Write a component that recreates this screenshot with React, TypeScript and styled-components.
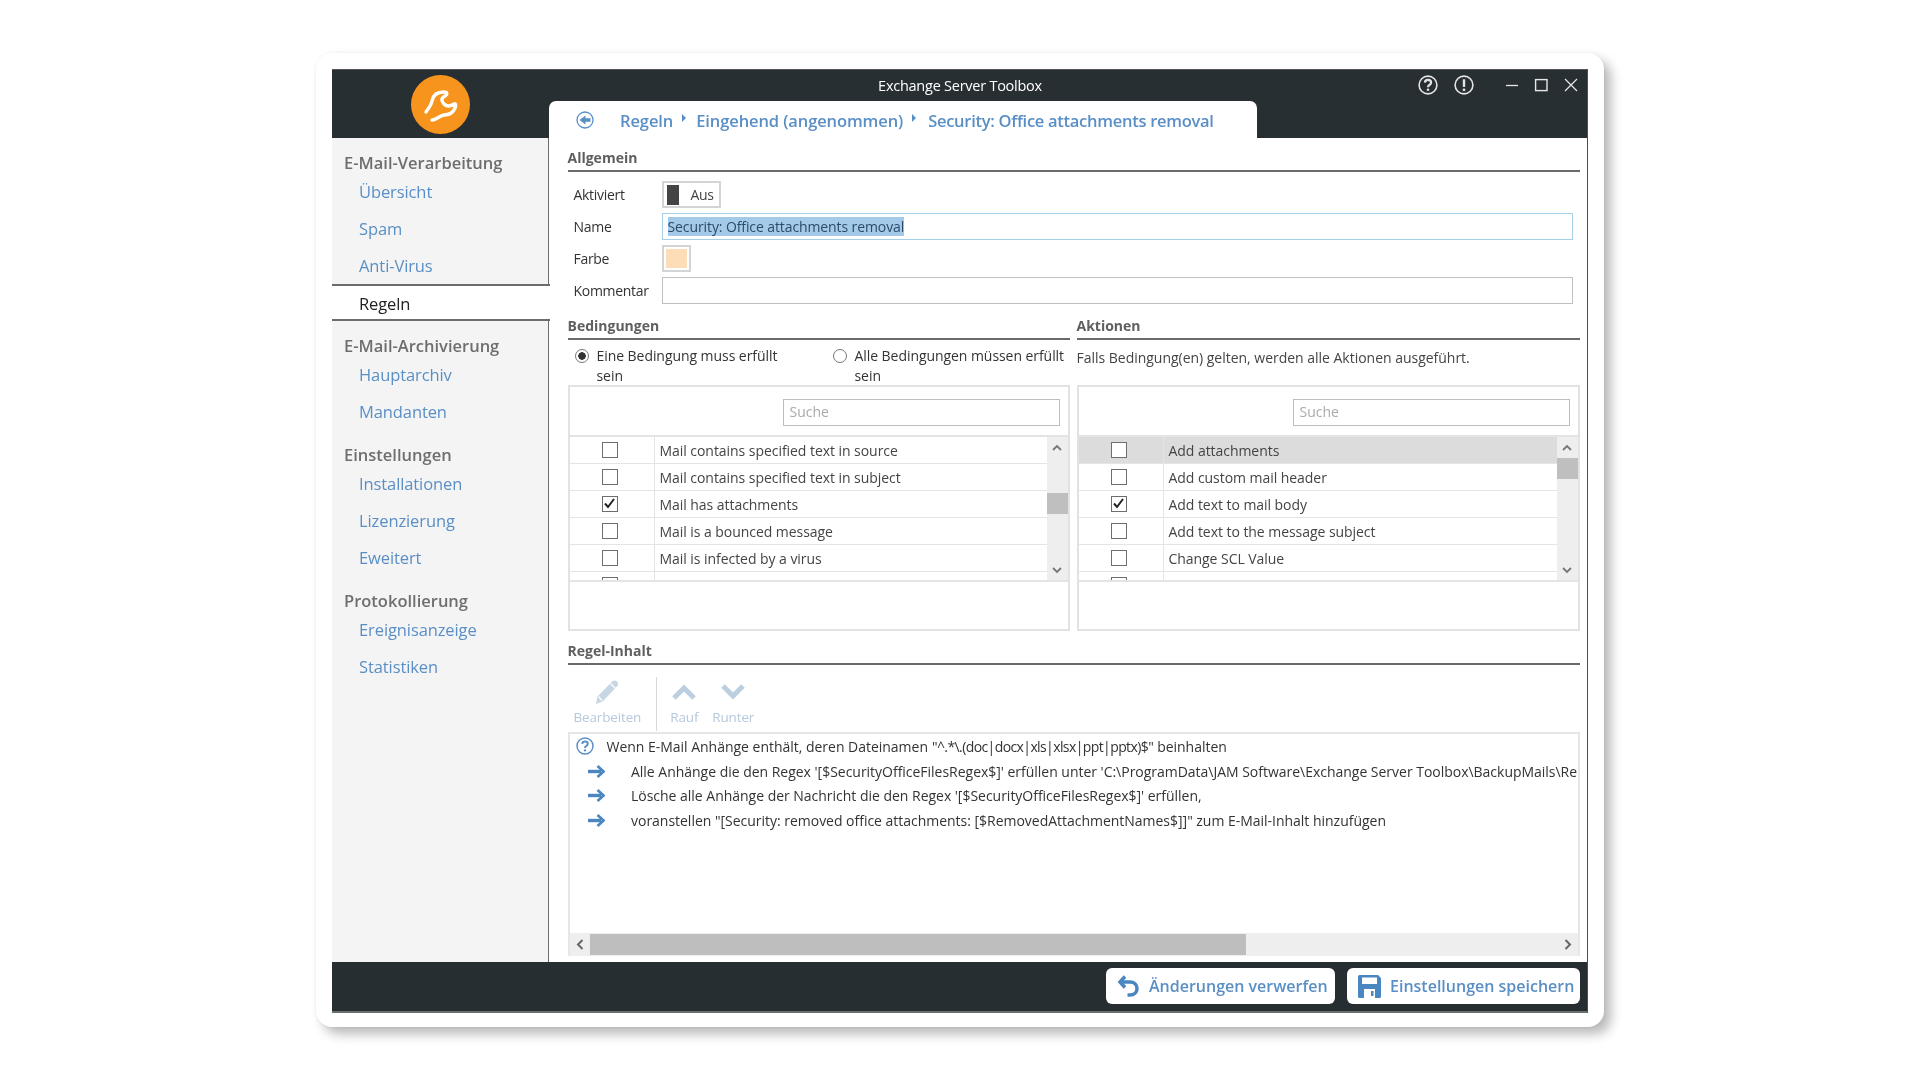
import React from "react";
import styled, { createGlobalStyle } from "styled-components";

const Global = createGlobalStyle`
  html, body { margin: 0; padding: 0; background: #fff; }
  body { width: 1920px; height: 1080px; overflow: hidden; font-family: "Open Sans", "Liberation Sans", sans-serif; }
  * { box-sizing: border-box; }
`;

const BLUE = "#5a8fc6";

const Page = styled.div`
  padding: 53px 0 0 316px;
`;
const Card = styled.div`
  width: 1288px;
  height: 974px;
  padding: 16px;
  background: #fff;
  border-radius: 16px;
  box-shadow: 7px 7px 12px rgba(0, 0, 0, 0.28), 0 0 3px rgba(0, 0, 0, 0.06);
`;
const Win = styled.div`
  width: 1256px;
  height: 944px;
  display: flex;
  flex-direction: column;
  border-top: 1px solid #555;
  border-right: 1.5px solid #4a4f52;
  border-bottom: 2px solid #6a6f72;
  filter: blur(0.3px);
`;
const TopBar = styled.header`
  height: 68px;
  flex: none;
  display: flex;
  background: #282f32;
`;
const LogoCell = styled.div`
  width: 217px;
  flex: none;
  display: flex;
  justify-content: center;
  padding: 5px 0 0 0;
`;
const TopRight = styled.div`
  flex: 1;
  display: flex;
  flex-direction: column;
`;
const TitleRow = styled.div`
  height: 31px;
  display: flex;
  align-items: center;
`;
const Title = styled.div`
  width: 822px;
  text-align: center;
  color: #fff;
  font-size: 14.5px;
  letter-spacing: -0.25px;
`;
const Controls = styled.div`
  display: flex;
  align-items: center;
  margin-left: 47px;
  padding-bottom: 1px;
  svg { display: block; }
`;
const Tab = styled.nav`
  width: 708px;
  height: 37px;
  background: #fff;
  border-radius: 7px 7px 0 0;
  display: flex;
  align-items: center;
  padding: 1px 0 0 27px;
  color: ${BLUE};
  font-size: 16.5px;
  font-weight: 600;
  letter-spacing: -0.1px;
`;
const CrumbGap = styled.span`
  width: 26px;
`;
const CrumbArrow = styled.span`
  width: 0;
  height: 0;
  border-left: 4px solid ${BLUE};
  border-top: 4px solid transparent;
  border-bottom: 4px solid transparent;
  margin: 0 10px 4px 9px;
`;
const CrumbLast = styled.span`
  margin-left: 2px;
  letter-spacing: -0.28px;
`;
const Body = styled.div`
  flex: 1;
  display: flex;
  min-height: 0;
`;
const Sidebar = styled.aside`
  width: 217px;
  flex: none;
  background: #f4f4f4;
  border-right: 1.5px solid #6c6c6c;
  padding-top: 14px;
`;
const NavHead = styled.div<{ $first?: boolean }>`
  height: 21px;
  line-height: 21px;
  margin-top: ${(p) => (p.$first ? 0 : 14)}px;
  padding-left: 12px;
  color: #6e6e6e;
  font-size: 16.5px;
  font-weight: 600;
`;
const NavItem = styled.div`
  height: 37px;
  line-height: 37px;
  padding-left: 27px;
  color: ${BLUE};
  font-size: 16.5px;
  letter-spacing: -0.1px;
`;
const NavActive = styled(NavItem)`
  background: #fff;
  color: #222;
  margin-right: -1.5px;
  position: relative;
  border-top: 2px solid #6c6c6c;
  border-bottom: 2px solid #6c6c6c;
  height: 37px;
  line-height: 35px;
`;
const Content = styled.main`
  flex: 1;
  background: #fff;
  padding: 0 7px 6px 18.5px;
  display: flex;
  flex-direction: column;
  min-width: 0;
`;
const Heading = styled.div`
  height: 26px;
  border-bottom: 2px solid #6a6a6a;
  color: #5f5f5f;
  font-size: 14px;
  font-weight: 700;
  line-height: 24px;
`;
const TopHeading = styled(Heading)`
  margin-top: 8px;
`;
const Form = styled.div`
  display: grid;
  grid-template-columns: 94px 1fr;
  grid-auto-rows: 27px;
  row-gap: 5px;
  padding: 9px 7px 0 0;
  align-items: center;
`;
const Label = styled.label`
  padding-left: 6px;
  font-size: 14px;
  letter-spacing: -0.3px;
  color: #333;
`;
const Toggle = styled.div`
  width: 59px;
  height: 27px;
  border: 2px solid #d4d4d4;
  display: flex;
  align-items: center;
  padding-left: 3px;
  font-size: 14px;
  letter-spacing: -0.3px;
  color: #444;
`;
const ToggleKnob = styled.span`
  width: 12px;
  height: 20px;
  background: #444;
  margin-right: 12px;
`;
const Field = styled.div<{ $focus?: boolean }>`
  height: 27px;
  border: 1.5px solid ${(p) => (p.$focus ? "#a6cfea" : "#c0c0c0")};
  padding: 0 0 0 5px;
  display: flex;
  align-items: center;
`;
const Selected = styled.span`
  background: #a3cbe9;
  color: #2e4a6a;
  font-size: 14px;
  letter-spacing: -0.1px;
  line-height: 19px;
`;
const Swatch = styled.div`
  width: 29px;
  height: 27px;
  border: 2px solid #d4d4d4;
  padding: 2px;
  &::after {
    content: "";
    display: block;
    height: 100%;
    background: #fddcb8;
  }
`;
const Columns = styled.div`
  display: grid;
  grid-template-columns: 502px 503px;
  column-gap: 7px;
  margin-top: 10px;
`;
const Options = styled.div`
  height: 45px;
  display: flex;
  padding-top: 6px;
`;
const Radio = styled.div<{ $w: number }>`
  display: flex;
  gap: 8px;
  font-size: 14px;
  letter-spacing: -0.06px;
  line-height: 20px;
  color: #333;
  padding-left: 7px;
  width: ${(p) => p.$w}px;
`;
const RadioText = styled.span<{ $w: number }>`
  width: ${(p) => p.$w}px;
  flex: none;
`;
const Dot = styled.span<{ $on?: boolean }>`
  width: 14px;
  height: 14px;
  flex: none;
  margin-top: 3px;
  border-radius: 50%;
  border: 1.5px solid #777;
  background: ${(p) => (p.$on ? "radial-gradient(circle, #333 0 3.5px, #fff 4px)" : "#fff")};
`;
const ActionNote = styled.div`
  height: 45px;
  padding-top: 8px;
  font-size: 14px;
  letter-spacing: -0.02px;
  line-height: 20px;
  color: #444;
`;
const ListBox = styled.div`
  height: 246px;
  border: 2px solid #e2e2e2;
  display: flex;
  flex-direction: column;
`;
const SearchRow = styled.div`
  height: 50px;
  flex: none;
  display: flex;
  justify-content: flex-end;
  padding: 12px 8px 0 0;
  border-bottom: 2px solid #e4e4e4;
`;
const Search = styled.div`
  width: 277px;
  height: 27px;
  border: 1.5px solid #bdbdbd;
  padding-left: 6px;
  line-height: 23px;
  font-size: 14px;
  color: #aaa;
`;
const ListArea = styled.div`
  height: 145px;
  flex: none;
  display: flex;
  border-bottom: 2px solid #e4e4e4;
`;
const Rows = styled.div`
  flex: 1;
  overflow: hidden;
`;
const Row = styled.div<{ $hot?: boolean }>`
  height: 27px;
  display: flex;
  align-items: center;
  border-bottom: 1.5px solid #e4e4e4;
  background: ${(p) => (p.$hot ? "#dcdcdc" : "#fff")};
`;
const CheckCell = styled.div`
  width: 85px;
  height: 100%;
  flex: none;
  display: flex;
  justify-content: center;
  align-items: center;
  border-right: 1.5px solid #e4e4e4;
  padding-right: 4px;
`;
const Box = styled.span`
  width: 16px;
  height: 16px;
  background: #fff;
  border: 1.5px solid #6e6e6e;
  display: block;
  svg { display: block; }
`;
const RowText = styled.div`
  padding-left: 5px;
  font-size: 14px;
  letter-spacing: -0.05px;
  color: #444;
  white-space: nowrap;
`;
const VBar = styled.div`
  width: 21px;
  flex: none;
  background: #eeeeee;
  position: relative;
  display: flex;
  flex-direction: column;
  justify-content: space-between;
  align-items: center;
  padding: 7px 0 6px;
  svg { display: block; }
`;
const Thumb = styled.span<{ $top: number }>`
  position: absolute;
  left: 0;
  right: 0;
  top: ${(p) => p.$top}px;
  height: 21px;
  background: #bfbfbf;
`;
const Tools = styled.div`
  height: 67px;
  flex: none;
  display: flex;
  align-items: stretch;
  padding: 12px 0 1px 0;
`;
const ToolGroup = styled.div`
  display: flex;
  gap: 14px;
  padding: 0 7px 0 13px;
`;
const ToolGroupFirst = styled(ToolGroup)`
  border-right: 1px solid #d8d8d8;
  padding: 0 15px 0 6px;
`;
const Tool = styled.div`
  display: flex;
  flex-direction: column;
  align-items: center;
  font-size: 13.5px;
  letter-spacing: -0.15px;
  line-height: 16px;
  color: #b6c9dc;
  svg { display: block; margin: 3px 0 5px; height: 24px; }
`;
const RuleBox = styled.div`
  flex: 1;
  min-height: 0;
  border: 2px solid #e6e6e6;
  border-bottom: 0;
  display: flex;
  flex-direction: column;
`;
const RuleLines = styled.div`
  flex: 1;
  min-height: 0;
  overflow: hidden;
`;
const RuleLine = styled.div<{ $sub?: boolean }>`
  height: 24.7px;
  display: flex;
  align-items: center;
  padding-left: ${(p) => (p.$sub ? 18.5 : 6)}px;
  font-size: 14px;
  letter-spacing: -0.02px;
  color: #333;
  white-space: nowrap;
  svg { flex: none; display: block; margin-right: ${(p) => (p.$sub ? 26 : 13)}px; }
`;
const Pattern = styled.span`
  letter-spacing: -0.6px;
  margin: 0 4px;
`;
const HBar = styled.div`
  height: 23px;
  flex: none;
  display: flex;
  background: #eeeeee;
  align-items: center;
  svg { display: block; }
`;
const HEnd = styled.span`
  width: 20px;
  flex: none;
  display: flex;
  justify-content: center;
`;
const HThumb = styled.span`
  width: 656px;
  height: 21px;
  background: #bebebe;
  margin-right: auto;
`;
const Footer = styled.footer`
  height: 49px;
  flex: none;
  background: #262e31;
  display: flex;
  justify-content: flex-end;
  gap: 12px;
  padding: 6px 7px 0 0;
`;
const FootBtn = styled.button<{ $w: number }>`
  width: ${(p) => p.$w}px;
  height: 36px;
  background: #fff;
  border: 0;
  border-radius: 6px;
  display: flex;
  align-items: center;
  gap: 9px;
  padding: 0 0 0 11px;
  color: ${BLUE};
  font-family: inherit;
  font-size: 16px;
  font-weight: 600;
  letter-spacing: 0;
  white-space: nowrap;
  svg { display: block; flex: none; }
`;

const Logo = () => (
  <svg width="59" height="59" viewBox="0 0 59 59">
    <circle cx="29.5" cy="29.5" r="29.5" fill="#f7941d" />
    <path
      d="M15 37 C17 33 20 32 21 26 C22 20 26 17 33 17 C36 17 37 19 34 21 C30 23 30 26 33 29 C36 32 40 31 43 29 C45 28 45 31 44 33 C42 38 38 40 33 40 C28 41 25 45 21 45"
      fill="none"
      stroke="#fff"
      strokeWidth="3.4"
      strokeLinecap="round"
      strokeLinejoin="round"
    />
  </svg>
);

const BackIcon = () => (
  <svg width="18" height="18" viewBox="0 0 18 18">
    <circle cx="9" cy="9" r="8" fill="none" stroke={BLUE} strokeWidth="1.3" />
    <path d="M14.500 7.300H9.500V4.500L3.500 9l6 4.500v-2.800h5z" fill={BLUE} />
  </svg>
);

const HelpIcon = ({ c = "#e4e4e4", s = 20 }: { c?: string; s?: number }) => (
  <svg width={s} height={s} viewBox="0 0 20 20">
    <circle cx="10" cy="10" r="8.9" fill="none" stroke={c} strokeWidth="1.6" />
    <path d="M6.900 7.600C7 5.600 8.400 4.900 10 4.900c1.800 0 3.100 1 3.100 2.600 0 1.500-1 2.100-2 2.800-.8.500-1.100 1-1.100 1.900" fill="none" stroke={c} strokeWidth="2.200" />
    <circle cx="10" cy="14.800" r="1.300" fill={c} />
  </svg>
);

const AlertIcon = () => (
  <svg width="20" height="20" viewBox="0 0 20 20" style={{ marginLeft: 16 }}>
    <circle cx="10" cy="10" r="8.9" fill="none" stroke="#e4e4e4" strokeWidth="1.6" />
    <path d="M10 4.300v7.600" stroke="#e4e4e4" strokeWidth="2.400" />
    <circle cx="10" cy="14.800" r="1.400" fill="#e4e4e4" />
  </svg>
);

const WinButtons = () => (
  <svg width="72" height="14" viewBox="0 0 72 14" style={{ marginLeft: 32 }}>
    <path d="M0 7.500h12" stroke="#e8e8e8" strokeWidth="1.300" />
    <rect x="29.600" y="1.600" width="11.400" height="11" fill="none" stroke="#e8e8e8" strokeWidth="1.400" />
    <path d="M59 1l12 12M71 1L59 13" stroke="#e8e8e8" strokeWidth="1.200" />
  </svg>
);

const Tick = () => (
  <svg width="13" height="13" viewBox="0 0 13 13">
    <path d="M2 6.500l3 3.500 6-8" fill="none" stroke="#222" strokeWidth="2" />
  </svg>
);

const ChevUp = () => (
  <svg width="10" height="7" viewBox="0 0 10 7">
    <path d="M1 6l4-4 4 4" fill="none" stroke="#777" strokeWidth="1.800" />
  </svg>
);
const ChevDown = () => (
  <svg width="10" height="7" viewBox="0 0 10 7">
    <path d="M1 1l4 4 4-4" fill="none" stroke="#777" strokeWidth="1.800" />
  </svg>
);
const ChevLeft = () => (
  <svg width="8" height="11" viewBox="0 0 8 11">
    <path d="M6.500 1L2 5.500 6.500 10" fill="none" stroke="#666" strokeWidth="2" />
  </svg>
);
const ChevRight = () => (
  <svg width="8" height="11" viewBox="0 0 8 11">
    <path d="M1.500 1L6 5.500 1.500 10" fill="none" stroke="#666" strokeWidth="2" />
  </svg>
);

const Pencil = () => (
  <svg width="24" height="24" viewBox="0 0 24 24">
    <path d="M1 24l1.500-7.500L17 1.500c1.800-1.500 3.700-1.200 5 0s1.600 3.200 0 5L7.500 21.500z" fill="#c8d6e4" />
    <path d="M3.500 16.500l3.500 4M15.500 3.500l5 5" stroke="#fff" strokeWidth="1.200" />
  </svg>
);
const BigUp = () => (
  <svg width="24" height="16" viewBox="0 0 24 16">
    <path d="M2 14L12 4l10 10" fill="none" stroke="#bccfe1" strokeWidth="5" />
  </svg>
);
const BigDown = () => (
  <svg width="24" height="16" viewBox="0 0 24 16">
    <path d="M2 2l10 10L22 2" fill="none" stroke="#bccfe1" strokeWidth="5" />
  </svg>
);
const RArrow = () => (
  <svg width="17" height="13" viewBox="0 0 17 13">
    <path d="M0 6.500h13" stroke="#4a86c0" strokeWidth="3.400" />
    <path d="M9.500 1l6 5.500-6 5.500" fill="none" stroke="#4a86c0" strokeWidth="2.600" />
  </svg>
);
const Undo = () => (
  <svg width="23" height="23" viewBox="0 0 23 23">
    <path d="M8 1.500L3 7l5 5.500" fill="none" stroke="#4a86c0" strokeWidth="3.500" />
    <path d="M3 7h10c4 0 7 2.500 7 6.500S17 20 13 20h-2.500" fill="none" stroke="#4a86c0" strokeWidth="3.500" />
  </svg>
);
const Floppy = () => (
  <svg width="23" height="23" viewBox="0 0 23 23">
    <path d="M0 1.500A1.500 1.500 0 0 1 1.500 0H20l3 3v18.500a1.500 1.500 0 0 1-1.500 1.500H1.500A1.500 1.500 0 0 1 0 21.500z" fill="#4a86c0" />
    <rect x="4" y="2.500" width="15" height="6.500" fill="#fff" />
    <rect x="6" y="14" width="11" height="9" fill="#fff" />
    <rect x="13" y="16" width="2.500" height="5" fill="#4a86c0" />
  </svg>
);

const CheckBox = ({ on }: { on?: boolean }) => <Box>{on && <Tick />}</Box>;

type Item = { t: string; on?: boolean; hot?: boolean };
const List = ({ items, top }: { items: Item[]; top: number }) => (
  <ListBox>
    <SearchRow>
      <Search>Suche</Search>
    </SearchRow>
    <ListArea>
      <Rows>
        {items.map((it, i) => (
          <Row key={i} $hot={it.hot}>
            <CheckCell>
              <CheckBox on={it.on} />
            </CheckCell>
            <RowText>{it.t}</RowText>
          </Row>
        ))}
      </Rows>
      <VBar>
        <ChevUp />
        <Thumb $top={top} />
        <ChevDown />
      </VBar>
    </ListArea>
  </ListBox>
);

const conditions: Item[] = [
  { t: "Mail contains specified text in source" },
  { t: "Mail contains specified text in subject" },
  { t: "Mail has attachments", on: true },
  { t: "Mail is a bounced message" },
  { t: "Mail is infected by a virus" },
  { t: "" },
];
const actions: Item[] = [
  { t: "Add attachments", hot: true },
  { t: "Add custom mail header" },
  { t: "Add text to mail body", on: true },
  { t: "Add text to the message subject" },
  { t: "Change SCL Value" },
  { t: "" },
];

export default function App() {
  return (
    <Page>
      <Global />
      <Card>
        <Win>
          <TopBar>
            <LogoCell>
              <Logo />
            </LogoCell>
            <TopRight>
              <TitleRow>
                <Title>Exchange Server Toolbox</Title>
                <Controls>
                  <HelpIcon />
                  <AlertIcon />
                  <WinButtons />
                </Controls>
              </TitleRow>
              <Tab>
                <BackIcon />
                <CrumbGap />
                Regeln
                <CrumbArrow />
                Eingehend (angenommen)
                <CrumbArrow />
                <CrumbLast>Security: Office attachments removal</CrumbLast>
              </Tab>
            </TopRight>
          </TopBar>
          <Body>
            <Sidebar>
              <NavHead $first>E-Mail-Verarbeitung</NavHead>
              <NavItem>Übersicht</NavItem>
              <NavItem>Spam</NavItem>
              <NavItem>Anti-Virus</NavItem>
              <NavActive>Regeln</NavActive>
              <NavHead>E-Mail-Archivierung</NavHead>
              <NavItem>Hauptarchiv</NavItem>
              <NavItem>Mandanten</NavItem>
              <NavHead>Einstellungen</NavHead>
              <NavItem>Installationen</NavItem>
              <NavItem>Lizenzierung</NavItem>
              <NavItem>Eweitert</NavItem>
              <NavHead>Protokollierung</NavHead>
              <NavItem>Ereignisanzeige</NavItem>
              <NavItem>Statistiken</NavItem>
            </Sidebar>
            <Content>
              <TopHeading>Allgemein</TopHeading>
              <Form>
                <Label>Aktiviert</Label>
                <Toggle>
                  <ToggleKnob />
                  Aus
                </Toggle>
                <Label>Name</Label>
                <Field $focus>
                  <Selected>Security: Office attachments removal</Selected>
                </Field>
                <Label>Farbe</Label>
                <Swatch />
                <Label>Kommentar</Label>
                <Field />
              </Form>
              <Columns>
                <div>
                  <Heading>Bedingungen</Heading>
                  <Options>
                    <Radio $w={258}>
                      <Dot $on />
                      <RadioText $w={195}>Eine Bedingung muss erfüllt sein</RadioText>
                    </Radio>
                    <Radio $w={244}>
                      <Dot />
                      <RadioText $w={216}>Alle Bedingungen müssen erfüllt sein</RadioText>
                    </Radio>
                  </Options>
                  <List items={conditions} top={56} />
                </div>
                <div>
                  <Heading>Aktionen</Heading>
                  <ActionNote>Falls Bedingung(en) gelten, werden alle Aktionen ausgeführt.</ActionNote>
                  <List items={actions} top={21} />
                </div>
              </Columns>
              <TopHeading>Regel-Inhalt</TopHeading>
              <Tools>
                <ToolGroupFirst>
                  <Tool>
                    <Pencil />
                    Bearbeiten
                  </Tool>
                </ToolGroupFirst>
                <ToolGroup>
                  <Tool>
                    <BigUp />
                    Rauf
                  </Tool>
                  <Tool>
                    <BigDown />
                    Runter
                  </Tool>
                </ToolGroup>
              </Tools>
              <RuleBox>
                <RuleLines>
                  <RuleLine>
                    <HelpIcon c={BLUE} s={18} />
                    Wenn E-Mail Anhänge enthält, deren Dateinamen
                    <Pattern>"^.*\.(doc|docx|xls|xlsx|ppt|pptx)$"</Pattern>
                    beinhalten
                  </RuleLine>
                  <RuleLine $sub>
                    <RArrow />
                    Alle Anhänge die den Regex '[$SecurityOfficeFilesRegex$]' erfüllen unter 'C:\ProgramData\JAM Software\Exchange Server Toolbox\BackupMails\Re
                  </RuleLine>
                  <RuleLine $sub>
                    <RArrow />
                    Lösche alle Anhänge der Nachricht die den Regex '[$SecurityOfficeFilesRegex$]' erfüllen,
                  </RuleLine>
                  <RuleLine $sub>
                    <RArrow />
                    voranstellen "[Security: removed office attachments: [$RemovedAttachmentNames$]]" zum E-Mail-Inhalt hinzufügen
                  </RuleLine>
                </RuleLines>
                <HBar>
                  <HEnd>
                    <ChevLeft />
                  </HEnd>
                  <HThumb />
                  <HEnd>
                    <ChevRight />
                  </HEnd>
                </HBar>
              </RuleBox>
            </Content>
          </Body>
          <Footer>
            <FootBtn $w={229}>
              <Undo />
              Änderungen verwerfen
            </FootBtn>
            <FootBtn $w={233}>
              <Floppy />
              Einstellungen speichern
            </FootBtn>
          </Footer>
        </Win>
      </Card>
    </Page>
  );
}
